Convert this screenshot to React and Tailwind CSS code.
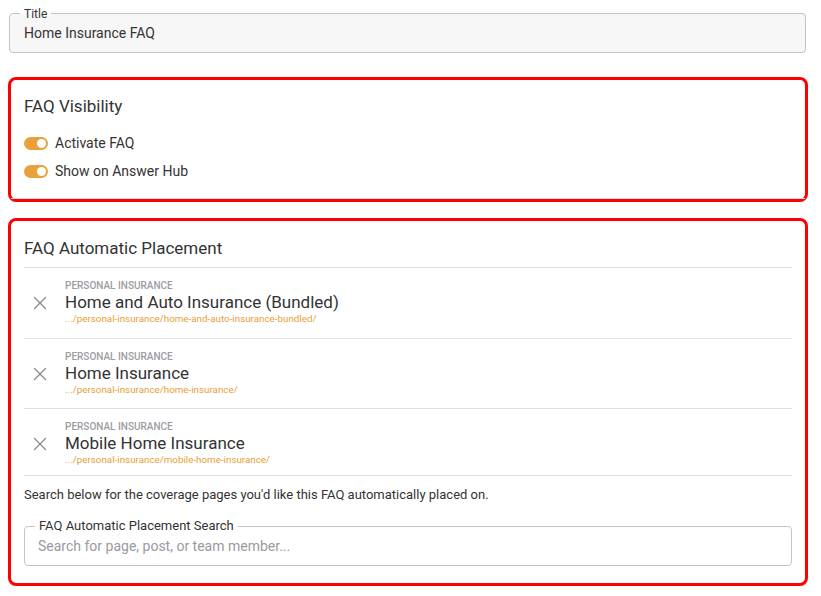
import { X } from "lucide-react";

const placements = [
  {
    category: "Personal Insurance",
    title: "Home and Auto Insurance (Bundled)",
    url: ".../personal-insurance/home-and-auto-insurance-bundled/",
    h: "h-[71px]",
  },
  {
    category: "Personal Insurance",
    title: "Home Insurance",
    url: ".../personal-insurance/home-insurance/",
    h: "h-[70px]",
  },
  {
    category: "Personal Insurance",
    title: "Mobile Home Insurance",
    url: ".../personal-insurance/mobile-home-insurance/",
    h: "h-[67px] pt-[4px]",
  },
];

function Toggle({ label }) {
  return (
    <div className="flex items-center h-7 gap-[7px]">
      <div className="w-6 h-[13px] rounded-full bg-[#e9a23b] flex items-center justify-end pr-[2px]">
        <div className="w-[9px] h-[9px] rounded-full bg-white"></div>
      </div>
      <span className="text-sm text-[#333]">{label}</span>
    </div>
  );
}

export default function App() {
  return (
    <div
      className="bg-white w-[821px] h-[596px] pt-[13px] pl-2 pr-[13px]"
      style={{ fontFamily: "Roboto, 'Liberation Sans', sans-serif" }}
    >
      {/* TITLE FIELD */}
      <div className="pl-px pr-[2px]">
        <div className="relative h-10 rounded border border-[#c4c4c4] bg-[#f7f7f7] flex items-center pl-[14px]">
          <span className="absolute -top-[8px] left-[10px] px-1 text-xs leading-4 text-[#333] bg-[linear-gradient(to_bottom,#fff_50%,#f7f7f7_50%)]">
            Title
          </span>
          <span className="text-sm text-[#333]">Home Insurance FAQ</span>
        </div>
      </div>

      {/* FAQ VISIBILITY */}
      <div className="mt-6 border-[3px] border-[#ff0000] rounded-lg">
        <div className="border-b border-[#dcdcdc] pt-[14px] pb-[13px] px-[13px]">
          <h2 className="text-[17px] leading-6 text-[#333] mb-[11px]">FAQ Visibility</h2>
          <Toggle label="Activate FAQ" />
          <Toggle label="Show on Answer Hub" />
        </div>
      </div>

      {/* FAQ AUTOMATIC PLACEMENT */}
      <div className="mt-4 border-[3px] border-[#ff0000] rounded-lg">
        <div className="pt-[15px] pb-[17px] px-[13px]">
          <h2 className="text-[17px] leading-6 text-[#333] pb-[7px] border-b border-[#e0e0e0]">
            FAQ Automatic Placement
          </h2>
          {placements.map((p) => (
            <div key={p.title} className={`flex items-center border-b border-[#e0e0e0] ${p.h}`}>
              <div className="w-[41px] flex">
                <X size={22} strokeWidth={1.3} className="ml-[5px] text-[#8a8a8a]" />
              </div>
              <div className="flex flex-col">
                <span className="text-[10px] leading-3 font-medium uppercase text-[#9c9ca4]">
                  {p.category}
                </span>
                <span className="text-[17px] leading-5 text-[#333]">{p.title}</span>
                <span className="text-[9.8px] leading-[14px] text-[#e8a035]">{p.url}</span>
              </div>
            </div>
          ))}
          <p className="text-[13px] leading-4 text-[#333] mt-[11px] mb-[23px]">
            Search below for the coverage pages you'd like this FAQ automatically placed on.
          </p>
          <div className="relative h-10 rounded border border-[#c4c4c4] bg-white flex items-center">
            <span className="absolute -top-[9px] left-[10px] px-1 bg-white text-[13px] leading-4 text-[#333]">
              FAQ Automatic Placement Search
            </span>
            <span className="pl-[13px] text-sm text-[#9a9aa2]">
              Search for page, post, or team member...
            </span>
          </div>
        </div>
      </div>
    </div>
  );
}
